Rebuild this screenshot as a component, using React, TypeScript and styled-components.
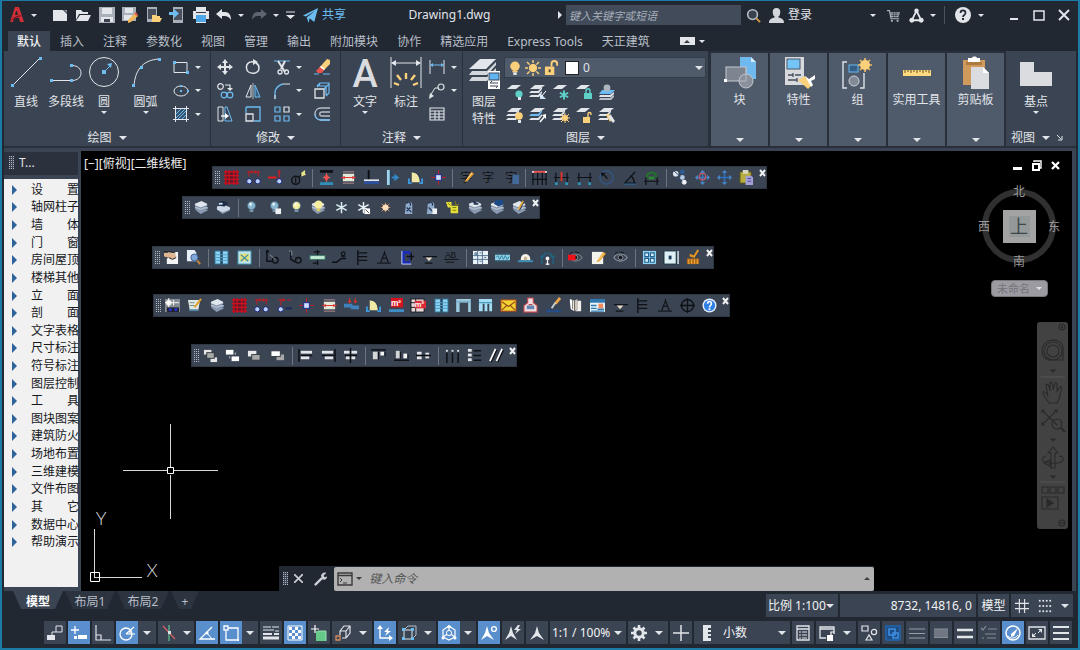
import React, { ReactNode } from 'react';
import styled, { createGlobalStyle, css } from 'styled-components';

const sans = `"Noto Sans", "Noto Sans CJK SC", sans-serif`;
const c = {
  frame: '#1c7ba5',
  chrome: '#212832',
  panel: '#3b4453',
  raised: '#4f5a6b',
  edge: '#29303b',
  text: '#e1e4e8',
  dim: '#b9bfc8',
  white: '#e2e5e9',
  blue: '#6cbcf2',
  amber: '#fbd07a',
  teal: '#5fd0c8',
  active: '#5a8fcd',
};

const GlobalStyle = createGlobalStyle`
  *, *::before, *::after { box-sizing: border-box; }
  body { margin: 0; background: ${c.chrome}; font: 12px/16px ${sans}; color: ${c.text}; }
  button, input, select { font: inherit; color: inherit; margin: 0; padding: 0; border: 0; border-radius: 0; background: transparent; }
  svg { display: block; flex: none; }
  ul { list-style: none; margin: 0; padding: 0; }
`;

/* ---------- drawing helpers ---------- */

const L = (d: string, stroke = c.white, w = 1, fill = 'none') => (
  <path d={d} stroke={stroke} strokeWidth={w} fill={fill} />
);
const F = (d: string, fill = c.white) => <path d={d} fill={fill} />;
const R = (x: number, y: number, w: number, h: number, fill = c.white, stroke?: string) => (
  <rect x={x} y={y} width={w} height={h} fill={fill} stroke={stroke} />
);
const C = (x: number, y: number, r: number, fill = 'none', stroke?: string, w = 1) => (
  <circle cx={x} cy={y} r={r} fill={fill} stroke={stroke} strokeWidth={w} />
);

const sheets = (a: string, b: string) => (
  <>
    {F('M5 1H15L10 5H0Z', a)}
    {F('M1 7H8L12 3V5L9 9H-1Z', b)}
    {F('M1 11H8L12 7V9L9 13H-1Z', a)}
  </>
);
const stack = (
  <>
    {F('M1 10L9 8L15 11L7 15Z', '#8b9bb4')}
    {F('M1 7L9 5L15 8L15 9L7 12L1 9Z', '#aebccf')}
    {F('M1 4L8 1L14 4V6L7 8L1 6Z', '#dfe6ee')}
    {L('M1 6L7 8.500L14 6M1 9L7 11.500L15 9', '#7c8aa0')}
  </>
);
const bulb = (a: string) => (
  <>
    {C(8, 6, 4.4, a, '#46627a')}
    {F('M6 3H8V6H6Z', '#fff')}
    {R(6, 10, 4, 3, '#7793a8')}
    {R(7, 13, 2, 2, '#333c48')}
  </>
);
const flake = (k: string, w = 1.6) => L('M8 2V14M2.500 5L13.500 11M13.500 5L2.500 11', k, w);
const redGrid = (
  <>
    {R(1, 1, 14, 14, '#5c1a28')}
    {L('M2 0V16M5.500 0V16M10.500 0V16M14 0V16M0 2H16M0 6H16M0 10H16M0 14H16', '#cf1020', 1.3)}
  </>
);
const twoColumns = (
  <>
    {L('M3 1V7M13 1V7M1 2H15', '#c41a24')}
    {F('M5 0V4L8 2Z M11 0V4L8 2Z', '#c41a24')}
    {C(3.5, 12, 2.8, '#b8d0ff', '#16206e')}
    {C(12.5, 12, 2.8, '#b8d0ff', '#16206e')}
  </>
);
const wallPiece = (
  <>
    {L('M2 2H14M2 14H14', '#b98d92')}
    {R(2, 4, 12, 8, '#e6ead8')}
    {L('M0 8H16', '#e02a2a')}
    {F('M4 6V10L1 8Z M12 6V10L15 8Z', '#d8423c')}
  </>
);
const door = (
  <>
    {F('M4 13V2C9 2 13 6 13 13Z', '#f1e7a6')}
    {L('M4 2C9 2 13 6 13 13', '#24384e')}
    {L('M1 9V15M15 9V15M2 14H4M12 14H14', '#3c97dd', 2)}
  </>
);
const column = (
  <>
    {L('M8 0V16M0 8H16', '#c8202c')}
    {R(5, 5, 6, 6, '#cfe0ff', '#1a2394')}
  </>
);
const windowBars = (
  <>
    {R(1, 1, 6, 14, '#8ed2f1', '#2a6789')}
    {R(9, 1, 6, 14, '#8ed2f1', '#2a6789')}
    {L('M1 5H15M1 8H15M1 11H15', '#4a9cc4')}
  </>
);
const noteLines = L('M3 0V16M3 3H13M3 7H13M3 11H13', '#0d1015', 1.4);
const triangleMark = L('M0 14H15M4 13L8 3L12 13M6 9H10M8 1V4', '#14181e', 1.4);
const level = (
  <>
    {L('M1 7H12M10 7H16M3 14H11', '#101318', 1.4)}
    {F('M4 8H11L7.500 12Z', '#e3d8c4')}
  </>
);
const eye = (k: string) => (
  <>
    {L('M1 8C4 3 12 3 15 8C12 13 4 13 1 8Z', k, 1.3)}
    {C(8, 8, 2.4, '#15191f', '#8a9099')}
    {L('M2 4L5 2M7 2L12 3', '#121519')}
  </>
);
const pencil = (
  <>
    {F('M7 11L13 2L16 4L9 12L6 13Z', '#e69a2d')}
    {L('M8 11L14 3', '#ffe38c')}
  </>
);
const charMark = (
  <text x="1" y="13" fontSize="13" fill="#0f1216" fontFamily="Noto Sans CJK SC">字</text>
);
const checker = (
  <>
    {L('M1 1H15V15H1Z', '#fff')}
    {[0, 1, 2, 3].map(y => [0, 1, 2, 3].map(x => (x + y) % 2 === 0 && (
      <React.Fragment key={`${x}-${y}`}>{R(2 + x * 3, 2 + y * 3, 3, 3, '#fff')}</React.Fragment>
    )))}
  </>
);

const glyphs: Record<string, ReactNode> = {
  /* quick access */
  new: <>{F('M1 3H11L15 7V14H1Z')}{F('M12 3L15 6V3Z', '#8b929c')}</>,
  open: <>{F('M1 3H6L8 5H13V7H4L1 13Z')}{F('M5 8H16L13 14H1Z')}</>,
  save: <>{F('M0 0H16V16H0Z', '#a9b0b9')}{R(3, 1, 10, 6)}{R(2, 10, 12, 5)}{R(5, 12, 6, 3, '#3a4250')}</>,
  saveAs: <>{F('M0 0H14V14H0Z', '#a9b0b9')}{R(3, 1, 8, 5)}{R(2, 8, 8, 5)}{F('M6 13L13 6L16 9L9 15L6 16Z', '#f1b95b')}{F('M12 7L14 5L16 8L15 9Z', '#e55b52')}</>,
  mobileOpen: <>{F('M1 0H11V15H1Z', '#a9b0b9')}{R(2, 2, 8, 10, '#4a515c')}{F('M6 8H10L11 9H14V11H16L14 15H6Z', c.amber)}</>,
  mobileSave: <>{F('M4 0H14V16H4Z', '#a9b0b9')}{R(5, 2, 8, 11, '#4a515c')}{F('M0 5H5V2L10 6.500L5 11V8H0Z', c.blue)}</>,
  print: <>{R(3, 0, 10, 4)}{F('M0 4H16V12H0Z')}{R(3, 8, 10, 7, '#4ea7e8')}{L('M3 15.500H13', c.white)}{R(3, 5, 10, 1, '#333b47')}</>,
  undo: <>{F('M0 7L6 2V5H9C13 5 15 8 15 13C13 10 11 9 9 9H6V12Z')}</>,
  redo: <>{F('M16 7L10 2V5H7C3 5 1 8 1 13C3 10 5 9 7 9H10V12Z', '#5c6470')}</>,
  plane: <>{F('M0 8L16 0L12 15L7 11L6 16L4 10L13 3L3 9Z', c.blue)}</>,
  search: <>{C(7, 7, 5.2, '#39424f', '#b7bdc5', 1.7)}{L('M11 11L15 15', '#d49a45', 2)}</>,
  user: <>{F('M8 0C11 0 12 2 12 4C12 7 11 9 10 9V10C14 11 16 12 16 16H0C0 12 2 11 6 10V9C5 9 4 7 4 4C4 2 5 0 8 0Z', '#d3d6da')}</>,
  cart: <>{L('M0 2H3L5 12H15', '#aab1ba', 1.5)}{F('M4 4H16L14 10H5Z', '#aab1ba')}{L('M5 6H15M5 8H14M8 4V10M11 4V10', c.chrome, 0.7)}{C(6, 14.5, 1.4, '#aab1ba')}{C(13, 14.5, 1.4, '#aab1ba')}</>,
  hub: <>{L('M8 3L3 13H13Z', c.white, 2)}{C(8, 3, 2.4, c.white)}{C(3, 13, 2.6, c.white)}{C(13, 13, 2.6, c.white)}</>,

  /* draw */
  rect: <>{L('M1 3.500H14V13.500H1Z')}{R(0, 2, 3, 3, c.blue)}{R(13, 12, 3, 3, c.blue)}</>,
  ellipse: <><ellipse cx="8" cy="8" rx="7" ry="5" fill="none" stroke={c.white} />{R(7, 7, 2, 2, c.blue)}{R(14, 7, 2, 2, c.blue)}{R(7, 2, 2, 2, c.blue)}</>,
  hatch: <>{R(3, 3, 10, 10, '#35536f')}{L('M3 8L8 3M3 12L12 3M5 13L13 5M9 13L13 9', c.blue)}{L('M2.500 0V16M13.500 0V16M0 2.500H16M0 13.500H16')}</>,

  /* modify */
  move: <>{L('M8 2V14M2 8H14', c.white, 2)}{F('M8 0L11 4H5ZM8 16L11 12H5ZM0 8L4 5V11ZM16 8L12 5V11Z')}</>,
  rotate: <>{L('M9 3C4 2 1 5 1.500 9C2 16 14 16 14 9C14 7 13 5 11 4', c.white, 1.5)}{F('M8 0L13 3L8 6Z')}</>,
  trim: <>{L('M0 2H16', c.blue, 1)}{L('M4 2L11 13M11 2L7 10', c.white, 2)}{C(6, 13, 2, 'none', c.white, 1.3)}{C(12.5, 13, 2, 'none', c.white, 1.3)}</>,
  erase: <>{L('M0 15H5M9 15H16', c.blue, 1)}{F('M5 9L13 0L16 1V5L9 12Z', c.amber)}{F('M4 10L6 8L10 11L8 14H4L2 12Z', '#e6544d')}{F('M6 8L7 7L11 10L10 11Z', '#fff')}</>,
  copy: <>{C(3.5, 3.5, 2.8, 'none', c.white, 1.2)}{L('M8 2H13V5', c.white, 1.2)}{F('M10 5H16L13 8Z')}{C(7, 12, 2.8, 'none', c.blue, 1.2)}{C(13, 12, 2.8, 'none', c.blue, 1.2)}</>,
  mirror: <>{L('M6 2V14H1Z')}{L('M10 2V14H15Z', c.blue, 1, '#365a7c')}{L('M8 0V16', c.dim)}</>,
  fillet: <>{L('M1 16V9C2 4 5 2 9 1', c.blue, 1.3)}{L('M9 1H16M1 12V16')}</>,
  explode: <>{L('M1 6H10V15H1Z', c.white, 1.3)}{L('M3 3L6 0H15V10L12 13M10 6L15 1M3 4L6 1M12 4V12M4 3H12', c.blue, 1.2)}</>,
  stretch: <>{L('M1 1H6V15H1Z')}{L('M8 15V1H10L15 15Z', c.blue)}{L('M4 10H9', '#fff', 1.3)}{F('M8 7L12 10L8 13Z', '#fff')}</>,
  scale: <>{L('M1 1H15V15H9M1 1V7', c.blue, 1.3)}{L('M1 8H8V15H1Z', c.white, 1.3)}</>,
  array: <>{L('M1 1H6V6H1ZM1 10H6V15H1ZM10 10H15V15H10Z', c.blue, 1.2)}{L('M10 1H15V6H10Z', c.white, 1.2)}</>,
  offset: <>{L('M16 2H7C-1 2 -1 14 7 14H16M16 6H8C5 6 5 10 8 10H16', c.dim, 1.3)}{L('M16 14H7C3 14 1 11 1 8', c.blue, 1.3)}</>,

  /* annotate */
  linear: <>{L('M1 1V15M15 1V15')}{L('M2 6H14', c.blue)}{F('M1 6L4 4V8ZM15 6L12 4V8Z', c.blue)}</>,
  leader: <>{C(12, 4, 3, 'none', c.white, 1.2)}{L('M9 5H6L1 13')}{F('M0 16L1 10L5 13Z')}</>,
  table: <>{L('M1 2H15V14H1ZM1 5H15M1 8H15M1 11H15M6 5V14M10 5V14', c.white, 1.1)}</>,

  /* layers */
  layOff: <>{F('M5 1H14L9 5H0Z')}{C(12, 10, 3.6, c.teal)}{R(11, 13, 3, 3)}</>,
  layIso: <>{sheets(c.white, c.white)}{F('M10 15V9L16 15Z', '#cfe4f5')}{L('M16 7L11 13', '#fff')}</>,
  layFreeze: <>{F('M5 1H14L9 5H0Z')}<g transform="translate(5 5) scale(.75)">{flake(c.teal, 2.6)}</g></>,
  layLock: <>{F('M5 1H14L9 5H0Z')}{R(8, 9, 8, 6, c.teal)}{L('M10 9V7C10 4 14 4 14 7V9', c.teal, 1.4)}</>,
  layCurrent: <>{F('M3 6H16L12 10H0Z', c.blue)}{F('M1 11H11L15 8V10L12 13H0Z')}{F('M1 14H11L15 11V13L12 16H0Z', c.dim)}{C(8, 4, 3.4, '#aeb4bd')}</>,
  layOn: <>{sheets(c.white, c.white)}{C(12, 9, 3.8, c.amber)}{R(11, 13, 3, 3)}</>,
  layUniso: <>{sheets(c.white, c.blue)}{L('M10 15L15 9', '#fff', 1.4)}{F('M16 7V12L12 8Z', '#fff')}</>,
  layThaw: <>{sheets(c.white, c.white)}{L('M12 6V16M7 11H17M8 7L16 15M16 7L8 15', c.amber, 1)}{C(12, 11, 3, c.amber)}</>,
  layUnlock: <>{F('M5 1H14L9 5H0Z')}{R(7, 10, 7, 6, c.amber)}{L('M12 10V7C12 5 15 5 15 7V8', c.amber, 1.4)}</>,
  layMatch: <>{sheets(c.white, c.white)}{F('M7 8L10 7L13 12L11 15Z', c.amber)}{F('M12 8L16 14L14 16L9 10Z')}</>,
  bulb: <>{C(8, 6, 5.4, c.amber)}{R(5, 11, 6, 2, c.amber)}{R(6, 13, 4, 3)}</>,
  sun: <>{L('M8 0V16M0 8H16M2 2L14 14M14 2L2 14', c.amber, 1.4)}{C(8, 8, 4.6, c.amber, c.raised)}</>,
  unlock: <>{R(1, 7, 10, 9, c.amber)}{L('M8 7V4C8 0 14 0 14 4V6', c.amber, 2)}{R(5, 10, 2, 3, '#4b4232')}</>,

  /* floating toolbars */
  redGrid, twoColumns, wallPiece, door, column, windowBars, noteLines, triangleMark, level, stack,
  axisAdd: <>{L('M12 0V8M0 8H8', '#d01c26', 1.2)}{F('M0 7H9V9H0Z', '#ee1c1c')}{F('M10 1L12 4L14 1Z', '#c41a24')}{C(12, 12, 2.8, '#b8d0ff', '#16206e')}</>,
  axisNo: <>{C(5, 11, 4.3, 'none', '#0f1216', 1.5)}{L('M5 8V14M8 8L13 3', '#0f1216', 1.3)}{F('M11 3L15 0V4L16 5L11 7Z', '#e7e68a')}</>,
  floorGap: <>{R(1, 0, 14, 3, '#0e1116')}{R(1, 13, 14, 3, '#2f8fb9')}{L('M8 3V13M4 8H12', '#b87770')}{F('M8 4L11 8L8 12L5 8Z', '#f0504a')}</>,
  lWall: <>{L('M5 0V11', '#0d0f14', 2)}{R(0, 10, 16, 2, '#dfe5ee')}{R(0, 12, 16, 3, '#2b4f9c')}</>,
  wallMove: <>{R(1, 0, 3, 16, '#9fd4ee')}{L('M6 8H10', '#3189ca', 2)}{F('M9 4L14 8L9 12Z', '#3189ca')}{L('M5 0V16', '#1b3f62')}</>,
  charPencil: <>{charMark}{pencil}</>,
  char: charMark,
  charBlock: <>{charMark}{R(9, 5, 7, 10, '#43699a')}</>,
  dimRed: <>{L('M1 2H15', '#f05050', 2)}{L('M1 3V16M6 3V16M11 3V16M15 3V16M0 10H16', '#0e1116', 1.3)}{C(1, 2, 1, '#fff')}{C(15, 2, 1, '#fff')}</>,
  dimBlue: <>{L('M2 3V14M14 3V14M0 8H16', '#0e1116', 1.3)}{L('M8 2V12', '#e03225', 2)}{R(1, 13, 3, 3, '#2d94b8')}{R(12, 13, 3, 3, '#2d94b8')}</>,
  dimPlain: <>{L('M2 3V14M14 3V14M0 8H16', '#0e1116', 1.3)}{R(1, 13, 3, 3, '#2d94b8')}{R(12, 13, 3, 3, '#2d94b8')}</>,
  radius: <>{C(8, 8, 7, 'none', '#31598a', 1.3)}{L('M4 4L9 9', '#0e1116', 1.4)}{F('M2 3H7L3 7Z', '#0e1116')}</>,
  angle: <>{L('M14 2L3 14H15M9 6C12 8 13 11 13 14', '#0e1116', 1.4)}{L('M2 15H15', '#2c6ea0')}</>,
  arcDim: <>{L('M3 8C3 1 13 1 13 8', '#1d7a25', 2)}{L('M0 12H16M2 8V16M14 8V16', '#0e1116', 1.3)}{F('M5 7H11V10H5Z', '#2a8c2f')}</>,
  nodes: <>{C(4, 4, 3, '#dfe6f0')}{C(11, 8, 2.6, '#b4c9e3')}{C(13, 13, 2.6, '#eef2f7')}{L('M2 1L9 7M4 8L11 13M10 2L14 6', '#274a74')}{R(9, 0, 4, 4, '#2a5e9c')}</>,
  moveRed: <>{L('M8 1V15M1 8H15', '#3b7cc4', 1.4)}{F('M8 0L11 3H5ZM8 16L11 13H5ZM0 8L3 5V11ZM16 8L13 5V11Z', '#4b86c6')}{C(8, 7, 3.5, 'none', '#c45a6a', 1.3)}</>,
  moveBlue: <>{L('M8 1V15M1 8H15', '#2f70ba', 1.6)}{F('M8 0L11 3H5ZM8 16L11 13H5ZM0 8L3 5V11ZM16 8L13 5V11Z', '#4b86c6')}</>,
  paste: <>{R(1, 2, 12, 12, '#b7ad3d', '#4e4a1d')}{R(4, 0, 6, 4, '#d8d8c0')}{F('M7 6H13L15 8V16H7Z', '#a5a1d8')}{L('M9 9H13M9 12H13', '#4a4694')}</>,
  layerEye: <>{F('M1 10L9 8L15 11L7 15Z', '#8b9bb4')}{F('M1 7L9 5L15 8V10L7 13L1 10Z', '#cdd8e6')}{F('M2 3C6 0 11 1 13 4L9 7L3 6Z', '#1f2e44')}{F('M3 3H7V5H3Z', '#cfe0f2')}</>,
  bulbOff: bulb('#86b7cf'),
  bulbPage: <>{bulb('#86b7cf')}{R(9, 9, 6, 6, '#eef1f4')}</>,
  bulbOn: bulb('#f4eea0'),
  bulbAll: <>{stack}{C(8, 5, 4.4, '#f6efa0')}{R(6, 9, 4, 3, '#d9c867')}</>,
  flake: flake('#d8eef2'),
  flakePage: <>{flake('#e8f4f6')}{R(9, 9, 6, 6, '#fff')}{L('M10 10L14 14', '#555')}</>,
  thaw: <>{L('M8 3V13M3 8H13M4 4L12 12M12 4L4 12', '#d58f5c')}{C(8, 8, 3.3, '#ffe0ba')}</>,
  lock: <>{F('M5 7C4 1 12 0 12 5V15H4Z', '#8fa9c8')}{L('M6 4C7 1 11 2 10 6M6 8L11 13M6 12L10 8', '#1f3050', 1.2)}</>,
  lockPage: <>{F('M5 7C4 1 12 0 12 5V15H4Z', '#8fa9c8')}{L('M6 4C7 1 11 2 10 6M6 8L11 13', '#1f3050', 1.2)}{R(10, 9, 5, 6, '#eef1f4')}</>,
  unlockY: <>{F('M1 2H7V6H14V14H6V8H3Z', '#e6df39')}{L('M3 3L6 6M8 8H12M8 11H12M11 1V5H15', '#7a7a12')}</>,
  stackDark: <>{stack}{L('M5 2H9M6 4H11', '#2b3c56', 2)}</>,
  stackBlue: <>{stack}{F('M6 0H14V5L9 7L4 4Z', '#1d4b86')}</>,
  stackPen: <>{stack}{L('M12 1L7 10', '#e2a237', 2)}{L('M13 2L8 11', '#26303c')}</>,
  handPage: <>{F('M4 2H15V15H3V9H4Z', '#f3f4f5')}{F('M0 3H6L12 4L13 8L9 10L5 8L0 7Z', '#e0b592')}{L('M0 2H5L12 3M5 8L9 10L13 8', '#1b1613')}</>,
  magPage: <>{F('M1 0H9L11 3V12H1Z', '#e8eff8')}{C(9, 8, 3.8, '#7ea6d6', '#3c5d8f')}{L('M12 11L15 15', '#c58742', 2)}</>,
  mapBox: <>{R(1, 1, 14, 14, '#bfe4ee', '#3b8ba8')}{R(3, 4, 10, 8, '#dfe07c')}{L('M4 5L12 12M12 5L4 12', '#3b8ba8', 1.2)}</>,
  nodeLine: <>{L('M2 0V12H8', '#0e1116', 1.5)}{C(11, 11, 3, 'none', '#0e1116', 1.4)}{L('M5 5L11 10', '#8d949e')}{R(1, 0, 3, 3, '#0e1116')}</>,
  nodeLine2: <>{L('M3 0V10L8 13', '#0e1116', 1.5)}{C(11, 11, 3, 'none', '#0e1116', 1.4)}{L('M1 1H4V6', '#8d949e')}</>,
  slab: <>{L('M8 0V16M4 2H11M3 14H9', '#0e1116', 1.3)}{R(0, 6, 16, 4, '#c7ecd6', '#3a7e67')}</>,
  stairs: <>{L('M0 13H5L10 9H15', '#0e1116', 1.6)}{C(12, 4, 2, 'none', '#0e1116', 1.2)}{L('M10 7H14', '#0e1116')}</>,
  exitBlock: <>{R(2, 1, 9, 14, '#1a2bb8')}{R(5, 4, 5, 8, c.panel)}{L('M7 7H15M12 3V11', '#0e1116', 1.5)}{L('M2 1V15H12', '#cfd6ff')}</>,
  abMark: <>{<text x="1" y="9" fontSize="9" fontFamily="Liberation Sans" fill="#0e1116">AB</text>}{L('M0 10H16M2 13H11', '#0e1116')}</>,
  plan: <>{R(0, 1, 16, 14, '#e9f3f8')}{L('M5 1V15M10 1V15M0 6H16M0 10H16M2 3H4V5H2ZM7 3H9M12 8H14M7 12H9', '#4a6c8c', 1)}</>,
  waves: <>{R(0, 5, 16, 6, '#8fd0e4')}{L('M0 4H16M0 12H16', '#2e5a72')}{L('M1 8L3 6L5 10L7 6L9 10L11 6L13 10L15 7', '#2c7ea0')}</>,
  dome: <>{F('M3 11C2 2 14 2 13 11Z', '#f6f3ea')}{R(0, 11, 16, 2, '#3a92b8')}{C(8, 9, 2, '#c7b696')}</>,
  portal: <>{L('M2 15V7L7 3M14 15V7L9 3M0 7H5M11 7H16', '#1f6480', 1.6)}{C(8, 9, 2, '#f2f2f2')}{L('M8 11V16M6 15H10', '#fff', 1.3)}</>,
  eyeRed: <>{eye('#757b84')}{R(0, 5, 8, 6, '#f0111a')}</>,
  pagePencil: <>{R(1, 2, 12, 13, '#f3f4ee')}{pencil}</>,
  eye: eye('#8a919c'),
  tiles: <>{R(1, 1, 14, 14, '#8fd2f3')}{L('M3 3H7V7H3ZM9 3H13V7H9ZM3 9H7V13H3ZM9 9H13V13H9Z', '#23618c', 1.2, '#d9f0fb')}</>,
  film: <>{R(0, 1, 13, 14, '#dff0f4', '#12303c')}{R(5, 6, 3, 4, '#143a56')}{L('M15 1V15', '#dff0f4', 1.5)}</>,
  broom: <>{L('M13 0L8 8', '#e8971c', 2)}{F('M1 9H14V15H1Z', '#b36a15')}{L('M3 10V15M6 10V15M9 10V15M12 10V15', '#f2b247')}{F('M4 4L9 6L8 8L4 7Z', '#e8971c')}</>,
  config: <>{R(0, 1, 16, 14, '#858b93')}{C(4, 5, 3, '#f1f1ee')}{L('M4 0V10M0 5H15M9 2V8', '#fff')}{R(2, 10, 13, 5, '#20232a')}{R(4, 11, 3, 3, '#2632d8')}{R(10, 11, 3, 3, '#2632d8')}</>,
  notePen: <>{F('M1 2H14L12 13H3Z', '#dfe8e3')}{L('M3 5H8M3 8H8', '#6e8b84')}{L('M15 1L8 10', '#e0a22b', 2)}{L('M2 13H12', '#4f84a4', 2)}</>,
  axisDots: <>{L('M4 1V8M1 2H9M11 2H15', '#c41a24')}{F('M6 0V4L9 2Z', '#c41a24')}{C(4, 12, 2.8, '#b8d0ff', '#16206e')}{L('M9 11H16', '#1b2560', 2)}</>,
  beamArrows: <>{F('M0 6H9V8H16V12H7V10H0Z', '#3f81ba')}{L('M6 0V5M12 0V5', '#e0332d')}{F('M4 3H8L6 6ZM10 3H14L12 6Z', '#e0332d')}</>,
  area: <>{R(2, 0, 13, 10, '#d6141f')}<text x="2" y="9" fontSize="9" fontWeight="700" fontFamily="Liberation Sans" fill="#fff">m²</text>{R(0, 12, 16, 3, '#3e8dc4')}</>,
  areaTable: <>{R(0, 1, 14, 14, '#e9d7d8', '#15181d')}{L('M0 5H14M0 10H14M5 1V15', '#15181d')}{R(4, 3, 12, 8, '#dc2c35')}<text x="4" y="10" fontSize="8" fontWeight="700" fontFamily="Liberation Sans" fill="#fff">m²</text></>,
  gate: <>{F('M0 1H16V15H13V5H4V15H0Z', '#7fb2cc')}{L('M1 2H15M2 5V15M14 5V15', '#c6e2ee')}</>,
  gateTwo: <>{F('M1 1H15V14H12V6H10V14H7V6H5V14H1Z', '#a3dcf3')}{L('M1 5H15', '#3188b4')}</>,
  mail: <>{R(0, 2, 16, 12, '#f0d534', '#b5441b')}{L('M1 4L8 9L15 4M1 13L6 8M15 13L10 8', '#9c4a16', 1.2)}</>,
  stamp: <>{F('M5 0H11V5L15 8V15H1V8L5 5Z', '#f3dedf')}{L('M5 0H11V5L15 8V15H1V8L5 5ZM6 7H10', '#b8444d', 1.2)}{R(4, 8, 8, 4, '#6387b4')}</>,
  brush: <>{L('M15 0L10 6', '#eda64a', 3)}{L('M10 5L6 11', '#c8d2da', 2)}{L('M0 14H16M3 11V16M12 11V16', '#1d4f9a', 1.4)}</>,
  book: <>{F('M2 1L7 3V14L3 12L2 4Z', '#fff')}{F('M7 3L10 1V12L7 14Z', '#cfc8c1')}{F('M10 3H14V14H8L10 12Z', '#f3efe9')}{L('M7 3V14M5 2V12', '#6a625b')}</>,
  sheet: <>{R(0, 2, 16, 13, '#e6f3fa')}{R(0, 1, 16, 4, '#2f78ae')}{L('M1 8H7M1 11H7M1 14H15M8 12H15', '#2f78ae', 1.4)}{R(9, 6, 5, 5, '#f38a5b')}</>,
  compass: <>{C(8, 8, 6.4, 'none', '#0e1116', 1.5)}{L('M8 0V16M0 8H16', '#0e1116', 1.4)}</>,
  help: <>{C(8, 8, 7.5, '#e7f0fc')}{C(8, 8, 6, '#2e7fe6')}{L('M6 6C6 3 10 3 10 6C10 8 8 8 8 10', '#fff', 1.7)}{R(7, 11, 2, 2, '#fff')}</>,
  order1: <>{R(1, 2, 8, 5, '#e4e5e4')}{R(8, 10, 7, 5, '#e4e5e4')}{R(4, 5, 8, 6, '#a9aaaa', '#30353d')}</>,
  order2: <>{R(1, 2, 8, 5, '#fff')}{R(7, 9, 8, 5, '#fff')}{L('M11 5V7M5 9V11', '#d5d7d9')}</>,
  order3: <>{R(1, 3, 9, 6, '#e9eae9')}{R(5, 7, 9, 6, '#a7a8a7', '#343a42')}</>,
  order4: <>{R(7, 7, 8, 6, '#a7a8a7')}{R(1, 3, 10, 6, '#fff', '#343a42')}</>,
  alignL: <>{L('M1 1V15M3 8H15', '#0e1116', 1.6)}{R(3, 3, 12, 3)}{R(3, 9, 9, 3)}</>,
  alignR: <>{L('M15 1V15M1 8H14', '#0e1116', 1.6)}{R(1, 3, 12, 3)}{R(4, 9, 9, 3)}</>,
  alignC: <>{L('M8 0V16M2 8H15', '#0e1116', 1.6)}{R(1, 3, 6, 3)}{R(9, 3, 6, 3)}{R(3, 9, 4, 3)}{R(9, 9, 4, 3)}</>,
  alignT: <>{L('M0 2H16', '#0e1116', 1.6)}{R(2, 4, 5, 8, '#d3d5d6')}{R(10, 4, 4, 4, '#f2f3f3')}{L('M8 4V12M15 4V9', '#0e1116')}</>,
  alignB: <>{L('M0 13H16', '#0e1116', 1.6)}{R(2, 3, 4, 8, '#d3d5d6')}{R(10, 6, 4, 5, '#f2f3f3')}{L('M7 4V11M15 7V11', '#0e1116')}</>,
  alignM: <>{L('M0 8H16', '#0e1116', 1.6)}{R(1, 4, 5, 3)}{R(1, 9, 5, 3)}{R(10, 5, 4, 2)}{R(10, 9, 4, 2)}</>,
  distV: <>{L('M2 5V16M8 5V16M14 5V16', '#0e1116', 1.6)}{R(1, 2, 2, 2)}{R(7, 2, 2, 2)}{R(13, 2, 2, 2)}</>,
  distH: <>{R(1, 1, 4, 3)}{R(1, 6, 4, 3)}{R(1, 11, 4, 3)}{L('M7 3H15M7 8H15M7 13H15', '#0e1116', 1.5)}</>,
  slashes: <>{L('M2 15L8 2M9 15L15 2', '#0e1116', 2)}{L('M1 14L7 1M8 14L14 1', '#fff', 1.8)}</>,

  /* status bar */
  drafting: <>{L('M9 1H15V7H9ZM9 7H5V10')}{R(0, 10, 8, 5)}</>,
  dynInput: <>{L('M4 1V9M0 5H8', '#fff', 1.3)}{R(7, 10, 9, 4, '#fff')}{R(3, 11, 3, 3, '#fff')}</>,
  ortho: <>{L('M1 0V15H16M1 10H6V15', c.white, 1.2)}</>,
  polar: <>{C(7, 9, 6, 'none', '#fff', 1.3)}{L('M7 9L15 2M7 9H16M11 4V9', '#fff', 1.2)}</>,
  isoDraft: <>{L('M2 1L14 14', '#d65f67', 1.2)}{L('M8 0V16', '#62c58f', 1.2)}{R(7, 6, 3, 3, '#dce2e6')}</>,
  track: <>{L('M13 2L1 14H16', '#fff', 1.3)}{C(8, 8, 1.6, '#fff')}{L('M8 8L13 14', '#fff', 1)}</>,
  osnap: <>{L('M5 3H15V15H3V6', '#fff', 1.3)}{L('M1 1H5V5H1Z', '#fff', 1.3)}{R(14, 14, 2, 2, '#fff')}</>,
  lineweight: <>{L('M0 2H8M9 2H16M0 5H11M12 6H16', c.white, 1.2)}{L('M0 9H9M11 9H16', c.white, 2)}{L('M0 13H16', c.white, 3)}</>,
  transparency: checker,
  cycle: <>{R(5, 6, 10, 10, '#66c98a')}{L('M7 6H15V16', '#98e0b4')}{L('M4 0V8M0 4H8', '#fff', 1.2)}</>,
  osnap3d: <>{L('M5 6L9 1H15V8L11 13H7M5 6H11V13M11 6L15 1M5 6V10', c.white, 1.2)}{L('M1 11H5V15H1Z', '#d68b5e', 1.3)}</>,
  dynUcs: <>{L('M3 2V13H15', '#fff', 1.4)}{F('M3 0L6 4H0ZM16 13L12 10V16ZM12 2L7 7H10L8 11L14 6H11Z', '#fff')}</>,
  filter: <>{L('M3 5H11V14H3Z', c.white)}{L('M4 4L7 1H15V10L12 13', c.dim)}{R(1, 3, 3, 3, c.blue)}{R(10, 3, 3, 3, c.blue)}{R(1, 12, 3, 3, c.blue)}{R(10, 12, 3, 3, c.blue)}</>,
  gizmo: <>{L('M8 1L14 5V12L8 15L2 12V5ZM8 8V1M8 8L2 12M8 8L14 12', '#fff', 1.2)}{C(8, 8, 2.6, c.active, '#fff')}{C(8, 1.5, 1.5, '#fff')}{C(2, 13, 1.5, '#fff')}{C(14, 13, 1.5, '#fff')}</>,
  annoVis: <>{F('M6 1L8 8L13 15L6 11L0 15L4 8Z', '#fff')}{C(13, 4, 2.4, 'none', '#fff', 1.4)}</>,
  annoAuto: <>{F('M6 1L8 8L12 15L6 11L0 15L4 8Z')}{F('M13 0L9 5H12L10 9L16 4H13L15 0Z')}</>,
  anno: F('M8 1L10 8L15 15L8 11L1 15L6 8Z'),
  gear: <>{L('M8 0V16M0 8H16M2.500 2.500L13.500 13.500M13.500 2.500L2.500 13.500', c.white, 2.6)}{C(8, 8, 4.2, c.panel, c.white, 3)}</>,
  plus: L('M8 0V16M0 8H16', c.white, 1.5),
  ruler: <>{F('M4 0H12V3H9V5H12V7H9V9H12V11H9V13H12V16H4Z')}</>,
  quickProps: <>{L('M2 1H14V15H2ZM2 4H14', c.white, 1.3)}{L('M4 7H6M7 7H12M4 10H6M7 10H12M4 13H6M7 13H12')}</>,
  lockUi: <>{L('M7 13H1V2H15V7M1 4H15', c.white, 1.3)}{R(8, 10, 6, 6, '#fff')}{L('M12 10V7H15V9', '#fff', 1.2)}</>,
  isolate: <>{L('M1 1H7V6H1ZM5 15L8 10L11 15Z', c.white, 1.2)}{C(13, 7, 2.6, 'none', c.white, 1.2)}</>,
  hardware: <>{R(0, 0, 16, 16, '#1d4e85')}{L('M4 4H10V10H4ZM8 8H13V13H8Z', '#3e8de0', 1.6)}{L('M1 1H15V15H1Z', '#2a6db5')}</>,
  thin: L('M0 4H16M0 8.500H16M0 13H16', '#969ca6', 1.2),
  grey: <>{R(1, 4, 14, 9, '#707782')}{L('M1 4H15M1 12.500H15', '#888e98')}</>,
  thick: L('M0 5H16M0 12H16', c.white, 2.4),
  checks: L('M0 3L2 5L5 1M7 4H16M4 9H15M1 13H3M6 13H15', '#858b95', 1.2),
  clean: <>{C(8, 8, 7, 'none', '#fff', 1.5)}{F('M6 9L13 3L9 11L6 12Z', '#fff')}{L('M3 11C5 14 10 14 13 10', '#fff')}</>,
  full: <>{L('M0 2H16V14H0Z', c.white, 1.3)}{L('M4 11L7 8M9 8L12 5', c.white)}{F('M3 8V12H7ZM13 4V8L9 4Z')}</>,
  menu: L('M0 2H16M0 8H16M0 14H16', c.white, 2),
  grid: L('M5 0V16M11 0V16M0 5H16M0 11H16', c.white, 1.3),
  dots: <>{[2, 8, 14].map(y => [1, 5, 9, 13].map(x => <React.Fragment key={`${x}-${y}`}>{R(x, y - 1, 2, 2)}</React.Fragment>))}</>,
  wrench: <>{L('M1 15L9 7', '#cdd1d6', 2.6)}{F('M8 4C9 1 12 0 14 1L11 4L12 6L15 5C15 8 12 10 9 8Z', '#cdd1d6')}</>,
  prompt: <>{L('M1 2H15V14H1ZM1 4.500H15', '#3a3a3a', 1.4)}{L('M3 7L5 9L3 11M6 12H10', '#3a3a3a')}</>,
};

const Icon = ({ name, size = 16 }: { name: string; size?: number }) => (
  <svg width={size} height={size} viewBox="0 0 16 16" aria-hidden="true" overflow="visible">{glyphs[name]}</svg>
);

const big: Record<string, ReactNode> = {
  line: <>{L('M3 29L30 2')}{R(1, 28, 3, 3, c.blue)}{R(29, 1, 3, 3, c.blue)}</>,
  polyline: <>{L('M2 24.500H22C34 24.500 34 9.500 22 9.500')}{R(0, 23, 3, 3, c.blue)}{R(20, 23, 3, 3, c.blue)}{R(20, 8, 3, 3, c.blue)}</>,
  circle: <>{C(16, 16, 14.5, 'none', c.white)}{L('M16 16L23 9', c.blue)}{F('M24 7L23 12L19 8Z', c.blue)}{R(14, 14, 4, 4, c.blue)}</>,
  arc: <>{L('M4 30C5 15 12 4 29 3')}{R(2, 28, 3, 3, c.blue)}{R(10, 10, 3, 3, c.blue)}{R(28, 2, 3, 3, c.blue)}</>,
  dim: <>{L('M1 1V32M31 1V32')}{L('M2 7H30')}{F('M1 7L6 4V10ZM31 7L26 4V10Z')}{L('M16 17V23M7 19L11 24M25 19L21 24M4 27L9 29M28 27L23 29', c.amber, 2.4)}</>,
  layers: <>{F('M12 3H28L18 13H1Z')}{F('M4 15H19L28 6V9L19 19H1Z', '#d3d6da')}{F('M4 21H19L28 12V15L19 25H1Z', '#d3d6da')}{R(20, 15, 12, 18, '#fff')}{R(21, 17, 10, 7, '#62b4f0', '#35465a')}{L('M22 27H30M24 25L22 27M22 30H30M28 32L30 30', '#3c4553')}</>,
  block: <>{F('M16 0H27L32 5V22H16Z', '#70b9ee')}{F('M27 0V5H32Z', '#d3eafa')}{R(2, 10, 20, 14, '#7d8591', '#c4c8ce')}{C(22, 24, 7, '#8a919c', '#c4c8ce')}{L('M22 10V24H15', '#b4b9c1')}{R(0, 22, 3, 3, '#fff')}</>,
  props: <>{R(2, 0, 19, 28, '#d7d9dc')}{R(4, 2, 13, 10, '#74c4f5', '#4b586a')}{L('M5 18H10M12 18H18M5 23H14M10 16V20M14 21V25', '#454e5c', 1.3)}{F('M15 23L22 19L29 28L25 32Z', c.amber)}{F('M22 19L26 22L32 18V22L28 24L30 28L28 30Z', '#fff')}</>,
  group: <>{L('M5 5H1V31H5M18 31H22V16', '#dfe3e8', 1.4)}{R(7, 8, 9, 7, '#365f86', '#68b7ee')}{C(12, 24, 5, '#828a96', '#ccd0d5')}{L('M23 1V15M16 8H30M18 3L28 13M28 3L18 13', '#f4bf62', 1.6)}{C(23, 8, 5, c.amber)}</>,
  ruler: <>{R(2, 13, 28, 6, '#ffd97d')}{L('M4 13V16M7 13V15M10 13V16M13 13V15M16 13V16M19 13V15M22 13V16M25 13V15M28 13V16', '#654f2b')}</>,
  clip: <>{R(3, 3, 22, 25, '#cf9a5c')}{F('M8 1H12C12 -1 17 -1 17 1H20V5H8Z', '#fff')}{R(6, 5, 16, 3, '#ad7a40')}{F('M11 10H23L29 16V32H11Z', '#dadcdf')}{F('M23 10V16H29Z', '#fff')}</>,
  base: F('M0 6H14V16H32V30H0Z', '#dadcdf'),
};
const BigIcon = ({ name }: { name: string }) => (
  <svg width="32" height="32" viewBox="0 0 32 32" aria-hidden="true" overflow="visible">
    {big[name]}
  </svg>
);

/* ---------- shared parts ---------- */

const Caret = styled.span<{ $small?: boolean; $side?: boolean; $up?: boolean; $dark?: boolean }>`
  flex: none;
  width: 0;
  height: 0;
  border: solid transparent;
  border-width: ${p => (p.$small ? '3px 3px 0' : '4px 4px 0')};
  border-top-color: ${p => (p.$dark ? '#3d3d3d' : c.white)};
  ${p => p.$side && css`border-width: 4px 0 4px 4px; border-color: transparent transparent transparent ${c.white};`}
  ${p => p.$up && css`transform: rotate(180deg);`}
`;

const PlainButton = styled.button<{ $w?: number }>`
  display: flex;
  flex: none;
  align-items: center;
  justify-content: center;
  width: ${p => (p.$w ? `${p.$w}px` : 'auto')};
  height: 100%;
`;

const Window = styled.div`
  display: flex;
  flex-direction: column;
  min-width: 1080px;
  min-height: 100vh;
  padding: 1px 2px 0 2px;
  border: solid ${c.frame};
  border-width: 1px 2px 2px 2px;
  background: ${c.chrome};
`;

/* ---------- title bar ---------- */

const TitleBar = styled.header`
  display: flex;
  height: 26px;
  align-items: center;
  padding-left: 3px;
`;
const QuickTools = styled.div`
  display: flex;
  width: 188px;
  height: 100%;
  margin-left: 8px;
  & > button { flex: 1; }
`;
const Share = styled.button`
  display: flex;
  align-items: center;
  gap: 4px;
  margin-left: 4px;
  color: ${c.blue};
`;
const DocTitle = styled.h1`
  flex: 1;
  margin: 0;
  font-size: 12px;
  font-weight: 400;
  text-align: center;
`;
const HelpSearch = styled.input`
  width: 175px;
  height: 20px;
  padding: 0 3px;
  background: #414b5a;
  font-size: 11px;
  &::placeholder { color: #a7afba; font-style: italic; opacity: 1; }
`;
const Login = styled.button`
  display: flex;
  align-items: center;
  gap: 4px;
  width: 99px;
  padding-left: 4px;
`;
const Divider = styled.span`
  width: 1px;
  height: 18px;
  margin: 0 7px 0 6px;
  background: #4a525e;
`;
const WindowControls = styled.div`
  display: flex;
  height: 100%;
  margin-left: 13px;
`;

/* ---------- ribbon ---------- */

const RibbonTabs = styled.nav`
  display: flex;
  gap: 1px;
  height: 23px;
  padding: 3px 0 0 4px;
`;
const RibbonTab = styled.button<{ $on?: boolean }>`
  padding: 2px 9px 0;
  color: ${p => (p.$on ? '#f1f3f5' : c.dim)};
  background: ${p => (p.$on ? c.panel : 'transparent')};
  font-weight: ${p => (p.$on ? 500 : 400)};
`;
const Collapse = styled.button`
  display: flex;
  align-items: center;
  gap: 4px;
  margin-left: 20px;
`;
const CollapseBox = styled.span`
  display: flex;
  align-items: center;
  justify-content: center;
  width: 15px;
  height: 8px;
  background: ${c.white};
`;
const Ribbon = styled.section`
  display: flex;
  height: 97px;
  border-bottom: 2px solid ${c.edge};
  background: ${c.panel};
`;
const PanelBody = styled.div`
  display: flex;
  flex: 1;
  padding: 4px 0 0 1px;
`;
const PanelTitle = styled.button`
  display: flex;
  align-items: center;
  justify-content: center;
  gap: 7px;
  height: 17px;
  padding-top: 1px;
`;
const Panel = styled.section<{ $w?: number }>`
  display: flex;
  flex-direction: column;
  flex: ${p => (p.$w ? 'none' : '1')};
  width: ${p => (p.$w ? `${p.$w}px` : 'auto')};
  border-right: 1px solid ${c.edge};
  &:last-child { border-right: 0; padding-right: 8px; }
`;
const Label = styled.span`
  white-space: pre-line;
  text-align: center;
  line-height: 17px;
`;
const BigTool = styled.button<{ $w: number }>`
  display: flex;
  flex: none;
  flex-direction: column;
  align-items: center;
  width: ${p => p.$w}px;
  height: 74px;
  padding-top: 1px;
  & > ${Label} { padding-top: 5px; }
  & > ${Caret} { margin-top: 1px; }
`;
const TextGlyph = styled.span`
  height: 32px;
  font: 500 38px/36px Roboto, sans-serif;
  color: #dadcdf;
`;
const ToolGrid = styled.div<{ $cols: string }>`
  display: grid;
  grid-template-columns: ${p => p.$cols};
  grid-template-rows: 24px 23px 24px;
`;
const SmallTool = styled.button`
  display: flex;
  align-items: center;
  gap: 6px;
  padding: 0 5px;
`;
const LayerTools = styled.div`
  flex: 1;
  padding: 2px 2px 0 0;
`;
const LayerCombo = styled.div`
  display: flex;
  align-items: center;
  gap: 3px;
  height: 21px;
  padding: 0 2px 0 3px;
  border: 1px solid #333c49;
  background: ${c.raised};
`;
const Swatch = styled.span`
  width: 14px;
  height: 14px;
  margin-left: 3px;
  border: 1px solid #222;
  background: #fff;
`;
const BareSelect = styled.select`
  flex: 1;
  min-width: 0;
  height: 100%;
  appearance: none;
  padding-left: 1px;
`;
const LayerGrid = styled.div`
  display: grid;
  grid-template-columns: repeat(5, 23px);
  grid-auto-rows: 23px;
  padding-top: 2px;
`;
const LayerButton = styled.button`
  display: flex;
  align-items: center;
  padding-left: 3px;
`;
const FoldedPanel = styled.button`
  display: flex;
  flex: none;
  flex-direction: column;
  align-items: center;
  gap: 2px;
  width: 57px;
  padding: 4px 0;
  background: ${c.raised};
  & > ${Caret} { margin-top: auto; }
`;
const FoldedRow = styled.div`
  display: flex;
  gap: 2px;
  padding: 2px 2px 0;
  background: ${c.edge};
`;

/* ---------- workspace ---------- */

const Workspace = styled.main`
  display: flex;
  flex: 1;
  padding: 3px 4px 0 0;
  background: ${c.panel};
`;
const Palette = styled.aside`
  display: flex;
  flex: none;
  flex-direction: column;
  width: 74px;
  margin: 1px 3px 4px 0;
  background: #f1f1f2;
`;
const PaletteHead = styled.div`
  display: flex;
  align-items: center;
  gap: 5px;
  height: 27px;
  padding: 0 5px 2px;
  border-bottom: 4px solid ${c.panel};
  background: #2b323e;
`;
const Grip = styled.span`
  flex: none;
  width: 5px;
  height: 13px;
  background:
    repeating-linear-gradient(90deg, transparent 0 1px, ${c.panel} 1px 2px),
    repeating-linear-gradient(#b3b9c2 0 1px, ${c.panel} 1px 2px);
`;
const PaletteList = styled.ul`
  display: grid;
  grid-template-rows: repeat(21, 1fr);
  height: 370px;
  margin-top: 2px;
`;
const PaletteItem = styled.button`
  display: flex;
  align-items: center;
  gap: 14px;
  width: 100%;
  height: 100%;
  padding-left: 8px;
  overflow: hidden;
  color: #17191c;
  white-space: nowrap;
  &::before {
    content: '';
    flex: none;
    border: solid transparent;
    border-width: 5px 0 5px 5px;
    border-left-color: #2d6399;
  }
`;
const Canvas = styled.div`
  position: relative;
  flex: 1;
  min-height: 440px;
  overflow: hidden;
  background: #000;
`;
const ViewLabel = styled.div`
  padding: 5px 3px;
  color: #eee;
`;
const Floating = styled.div<{ $x: number; $y: number; $w: number }>`
  position: absolute;
  left: ${p => p.$x}px;
  top: ${p => p.$y}px;
  display: flex;
  align-items: center;
  width: ${p => p.$w}px;
  height: 23px;
  padding: 0 8px 0 2px;
  border: 1px solid #2f3743;
  background: ${c.panel};
`;
const FloatingTools = styled.div`
  display: flex;
  flex: 1;
  align-items: center;
`;
const ToolButton = styled.button`
  display: flex;
  flex: 1 1 0;
  justify-content: center;
`;
const ToolRule = styled.span`
  flex: none;
  width: 1px;
  height: 18px;
  margin: 0 2px 0 3px;
  background: #6c7480;
`;
const CloseFloating = styled.button`
  position: absolute;
  top: 2px;
  right: 0;
`;
const Crosshair = styled.svg`
  position: absolute;
  left: 42px;
  top: 273px;
`;
const Ucs = styled.svg`
  position: absolute;
  left: 8px;
  bottom: 0;
`;
const ChildControls = styled.div`
  position: absolute;
  right: 11px;
  top: 9px;
  display: flex;
  gap: 8px;
`;
const Cube = styled.svg`
  position: absolute;
  right: 9px;
  top: 28px;
`;
const UcsMenu = styled.button`
  position: absolute;
  right: 24px;
  top: 129px;
  display: flex;
  align-items: center;
  justify-content: space-between;
  width: 57px;
  height: 17px;
  padding: 0 5px;
  border: 1px solid #77777d;
  border-radius: 4px;
  background: #9b9ba1;
  color: #74747a;
  font-size: 11px;
`;
const NavBar = styled.div`
  position: absolute;
  right: 4px;
  top: 171px;
  border-radius: 3px;
  background: #424242;
`;
const CommandLine = styled.div`
  position: absolute;
  right: 20%;
  bottom: 0;
  left: 20%;
  display: flex;
  align-items: center;
  height: 25px;
  padding-left: 4px;
  background: ${c.chrome};
`;
const CommandBox = styled.label`
  display: flex;
  flex: 1;
  align-items: center;
  gap: 3px;
  height: 24px;
  padding: 0 4px 0 3px;
  border-radius: 2px;
  background: #b1b1b1;
`;
const CommandInput = styled.input`
  flex: 1;
  padding: 0 4px;
  color: #333;
  outline: 0;
  &::placeholder { color: #555; font-style: italic; opacity: 1; }
`;

/* ---------- bottom bars ---------- */

const LayoutRow = styled.div`
  display: flex;
  justify-content: space-between;
  height: 29px;
  padding: 0 3px 0 9px;
`;
const LayoutTabs = styled.nav`
  display: flex;
  height: 18px;
`;
const LayoutTab = styled.button<{ $on?: boolean; $w: number }>`
  width: ${p => p.$w}px;
  margin-right: 2px;
  padding-top: 3px;
  background: ${p => (p.$on ? c.panel : '#2c3440')};
  color: ${p => (p.$on ? '#fff' : c.dim)};
  font-weight: ${p => (p.$on ? 700 : 400)};
  clip-path: polygon(0 0, 100% 0, calc(100% - 8px) 100%, 8px 100%);
`;
const StatusGroup = styled.div`
  display: flex;
  align-items: flex-start;
  gap: 2px;
  padding-top: 3px;
`;
const StatusCell = styled.div<{ $w: number; $end?: boolean }>`
  display: flex;
  align-items: center;
  justify-content: ${p => (p.$end ? 'flex-end' : 'center')};
  gap: 9px;
  width: ${p => p.$w}px;
  height: 23px;
  padding: 0 4px;
  background: ${c.panel};
  color: #f1f3f5;
  white-space: nowrap;
`;
const StatusBar = styled.footer`
  display: flex;
  gap: 2px;
  height: 28px;
  padding: 1px 0 4px 40px;
`;
const StatusButton = styled.button<{ $on?: boolean }>`
  display: flex;
  flex: none;
  align-items: center;
  justify-content: center;
  width: 22px;
  height: 23px;
  background: ${p => (p.$on ? c.active : c.panel)};
`;
const StatusPair = styled.div<{ $w: number }>`
  display: flex;
  flex: none;
  width: ${p => p.$w}px;
  height: 23px;
  background: ${c.panel};
  & > button:last-child { flex: 1; width: auto; background: transparent; }
`;
const StatusSelect = styled.label<{ $w: number; $gap?: number }>`
  display: flex;
  flex: none;
  align-items: center;
  gap: ${p => p.$gap ?? 0}px;
  width: ${p => p.$w}px;
  height: 23px;
  padding: 0 4px 0 ${p => (p.$gap ? 5 : 1)}px;
  background: ${c.panel};
  color: #f1f3f5;
`;

/* ---------- data ---------- */

const ribbonTabs = ['默认', '插入', '注释', '参数化', '视图', '管理', '输出', '附加模块', '协作', '精选应用', 'Express Tools', '天正建筑'];
const modifyTools = ['move', 'rotate', 'trim', 'erase', 'copy', 'mirror', 'fillet', 'explode', 'stretch', 'scale', 'array', 'offset'];
const layerTools = ['layOff', 'layIso', 'layFreeze', 'layLock', 'layCurrent', 'layOn', 'layUniso', 'layThaw', 'layUnlock', 'layMatch'];
const folded = [['block', '块'], ['props', '特性'], ['group', '组'], ['ruler', '实用工具'], ['clip', '剪贴板']];
const paletteItems = [
  '设　　置', '轴网柱子', '墙　　体', '门　　窗', '房间屋顶', '楼梯其他', '立　　面', '剖　　面', '文字表格', '尺寸标注', '符号标注',
  '图层控制', '工　　具', '图块图案', '建筑防火', '场地布置', '三维建模', '文件布图', '其　　它', '数据中心', '帮助演示',
];
const toolbars = [
  { x: 131, y: 15, w: 555, tools: 'redGrid twoColumns axisAdd axisNo | floorGap wallPiece lWall wallMove door column | charPencil char charBlock | dimRed dimBlue dimPlain radius angle arcDim | nodes moveRed moveBlue paste' },
  { x: 101, y: 45, w: 358, tools: 'stack layerEye | bulbOff bulbPage bulbOn bulbAll flake flakePage thaw lock lockPage unlockY stackDark stackBlue stackPen' },
  { x: 71, y: 95, w: 562, tools: 'handPage magPage | windowBars mapBox | nodeLine nodeLine2 slab stairs noteLines triangleMark exitBlock level abMark | plan waves dome portal | eyeRed pagePencil eye | tiles film broom' },
  { x: 72, y: 143, w: 577, tools: 'config notePen stack redGrid twoColumns axisDots column wallPiece beamArrows door area areaTable windowBars gate gateTwo mail stamp brush book sheet level noteLines triangleMark compass help' },
  { x: 110, y: 193, w: 326, tools: 'order1 order2 order3 order4 | alignL alignR alignC | alignT alignB alignM | distV distH slashes' },
];

type StatusItem = { n: string; on?: boolean; w?: number };
const statusLeft: StatusItem[] = [
  { n: 'drafting' }, { n: 'dynInput', on: true }, { n: 'ortho' }, { n: 'polar', on: true, w: 40 }, { n: 'isoDraft', w: 36 },
  { n: 'track', on: true }, { n: 'osnap', on: true, w: 38 }, { n: 'lineweight' }, { n: 'transparency', on: true }, { n: 'cycle' },
  { n: 'osnap3d', w: 40 }, { n: 'dynUcs', on: true }, { n: 'filter', w: 38 }, { n: 'gizmo', on: true, w: 38 },
  { n: 'annoVis', on: true }, { n: 'annoAuto' }, { n: 'anno' },
];
const statusRight: StatusItem[] = [
  { n: 'quickProps' }, { n: 'lockUi', w: 40 }, { n: 'isolate' }, { n: 'hardware' }, { n: 'thin' }, { n: 'grey' }, { n: 'thick' },
  { n: 'checks' }, { n: 'clean', on: true }, { n: 'full' }, { n: 'menu' },
];

const StatusTool = ({ n, on, w }: StatusItem) =>
  w ? (
    <StatusPair $w={w}>
      <StatusButton $on={on} aria-label={n}><Icon name={n} /></StatusButton>
      <StatusButton aria-label={`${n} options`}><Caret /></StatusButton>
    </StatusPair>
  ) : (
    <StatusButton $on={on} aria-label={n}><Icon name={n} /></StatusButton>
  );

/* ---------- sections ---------- */

const Title = () => (
  <TitleBar>
    <PlainButton $w={20} aria-label="Application menu">
      <svg width="15" height="16" viewBox="0 0 15 16">
        <path d="M5 0H9L14 15H10L9 11H4L3 15H0Z M6 4L5 8H8L7 4Z" fill="#d12f36" fillRule="evenodd" />
        <path d="M0 15L4 10L10 8L12 9L4 12Z" fill="#8d1b26" />
      </svg>
    </PlainButton>
    <PlainButton $w={13} aria-label="More"><Caret $small /></PlainButton>
    <QuickTools>
      {['new', 'open', 'save', 'saveAs', 'mobileOpen', 'mobileSave', 'print', 'undo'].map(n => (
        <PlainButton key={n} aria-label={n}><Icon name={n} /></PlainButton>
      ))}
    </QuickTools>
    <PlainButton $w={10} aria-label="Undo list"><Caret $small /></PlainButton>
    <PlainButton $w={25} aria-label="redo"><Icon name="redo" /></PlainButton>
    <PlainButton $w={10} aria-label="Redo list"><Caret $small /></PlainButton>
    <PlainButton $w={18} aria-label="Customize">
      <svg width="9" height="9" viewBox="0 0 9 9">{L('M0 1H9')}{F('M0 4H9L4.500 8Z')}</svg>
    </PlainButton>
    <Share><Icon name="plane" size={15} />共享</Share>
    <DocTitle>Drawing1.dwg</DocTitle>
    <PlainButton $w={13} aria-label="Collapse search"><Caret $side /></PlainButton>
    <HelpSearch aria-label="搜索" placeholder="键入关键字或短语" />
    <PlainButton $w={24} aria-label="search"><Icon name="search" size={15} /></PlainButton>
    <Login><Icon name="user" size={15} />登录</Login>
    <PlainButton $w={18} aria-label="Account menu"><Caret $small /></PlainButton>
    <PlainButton $w={23} aria-label="cart"><Icon name="cart" size={13} /></PlainButton>
    <PlainButton $w={23} aria-label="hub"><Icon name="hub" size={15} /></PlainButton>
    <PlainButton $w={10} aria-label="Hub menu"><Caret $small /></PlainButton>
    <Divider />
    <PlainButton $w={22} aria-label="Help">
      <svg width="16" height="16" viewBox="0 0 16 16">{C(8, 8, 8, c.white)}{L('M5.500 6C5.500 2.500 10.500 2.500 10.500 6C10.500 8 8 8 8 10', c.chrome, 1.7)}{R(7, 11, 2, 2, c.chrome)}</svg>
    </PlainButton>
    <PlainButton $w={14} aria-label="Help menu"><Caret $small /></PlainButton>
    <WindowControls>
      <PlainButton $w={25} aria-label="Minimize"><svg width="8" height="12" viewBox="0 0 8 12">{R(0, 9, 8, 2)}</svg></PlainButton>
      <PlainButton $w={25} aria-label="Maximize"><svg width="12" height="11" viewBox="0 0 12 11">{L('M1 1H11V10H1Z', c.white, 1.5)}</svg></PlainButton>
      <PlainButton $w={25} aria-label="Close"><svg width="12" height="12" viewBox="0 0 12 12">{L('M1 1L11 11M11 1L1 11', c.white, 2)}</svg></PlainButton>
    </WindowControls>
  </TitleBar>
);

const RibbonArea = () => (
  <>
    <RibbonTabs>
      {ribbonTabs.map((t, i) => <RibbonTab key={t} $on={i === 0}>{t}</RibbonTab>)}
      <Collapse aria-label="Collapse ribbon"><CollapseBox><Caret $small $up $dark /></CollapseBox><Caret $small /></Collapse>
    </RibbonTabs>
    <Ribbon>
      <Panel $w={207}>
        <PanelBody>
          <BigTool $w={42}><BigIcon name="line" /><Label>直线</Label></BigTool>
          <BigTool $w={38}><BigIcon name="polyline" /><Label>多段线</Label></BigTool>
          <BigTool $w={38}><BigIcon name="circle" /><Label>圆</Label><Caret $small /></BigTool>
          <BigTool $w={45}><BigIcon name="arc" /><Label>圆弧</Label><Caret $small /></BigTool>
          <ToolGrid $cols="40px">
            {['rect', 'ellipse', 'hatch'].map(n => (
              <SmallTool key={n} aria-label={n}><Icon name={n} /><Caret $small /></SmallTool>
            ))}
          </ToolGrid>
        </PanelBody>
        <PanelTitle>绘图<Caret /></PanelTitle>
      </Panel>
      <Panel $w={130}>
        <PanelBody>
          <ToolGrid $cols="28px 29px 40px 28px">
            {modifyTools.map((n, i) => (
              <SmallTool key={n} aria-label={n}><Icon name={n} />{i % 4 === 2 && <Caret $small />}</SmallTool>
            ))}
          </ToolGrid>
        </PanelBody>
        <PanelTitle>修改<Caret /></PanelTitle>
      </Panel>
      <Panel $w={122}>
        <PanelBody>
          <BigTool $w={46}><TextGlyph>A</TextGlyph><Label>文字</Label><Caret $small /></BigTool>
          <BigTool $w={36}><BigIcon name="dim" /><Label>标注</Label></BigTool>
          <ToolGrid $cols="36px">
            <SmallTool aria-label="linear"><Icon name="linear" /><Caret $small /></SmallTool>
            <SmallTool aria-label="leader"><Icon name="leader" /><Caret $small /></SmallTool>
            <SmallTool aria-label="table"><Icon name="table" /></SmallTool>
          </ToolGrid>
        </PanelBody>
        <PanelTitle>注释<Caret /></PanelTitle>
      </Panel>
      <Panel $w={246}>
        <PanelBody>
          <BigTool $w={40}><BigIcon name="layers" /><Label>{'图层\n特性'}</Label></BigTool>
          <LayerTools>
            <LayerCombo>
              <Icon name="bulb" size={14} /><Icon name="sun" /><Icon name="unlock" size={15} /><Swatch />
              <BareSelect aria-label="图层"><option>0</option></BareSelect><Caret />
            </LayerCombo>
            <LayerGrid>
              {layerTools.map(n => <LayerButton key={n} aria-label={n}><Icon name={n} /></LayerButton>)}
            </LayerGrid>
          </LayerTools>
        </PanelBody>
        <PanelTitle>图层<Caret /></PanelTitle>
      </Panel>
      <FoldedRow>
        {folded.map(([n, t]) => (
          <FoldedPanel key={n}><BigIcon name={n} /><Label>{t}</Label><Caret /></FoldedPanel>
        ))}
      </FoldedRow>
      <Panel>
        <PanelBody>
          <BigTool $w={58}><BigIcon name="base" /><Label>基点</Label><Caret $small /></BigTool>
        </PanelBody>
        <PanelTitle>视图<Caret /><svg width="6" height="6" viewBox="0 0 6 6">{L('M0 0L4 4M5 1V5H1')}</svg></PanelTitle>
      </Panel>
    </Ribbon>
  </>
);

const ViewCube = () => (
  <Cube width="88" height="92" viewBox="-3 -6 88 92" fontFamily="Noto Sans CJK SC" fontSize="12" fill="#9a9a9a" textAnchor="middle">
    {C(41, 41, 34, 'none', '#303030', 6)}
    <rect x="25" y="25" width="33" height="33" fill="#a3a3a3" />
    <rect x="31" y="31" width="21" height="21" fill="#949999" />
    <text x="41" y="48" fontSize="18" fill="#3f4648">上</text>
    <text x="41" y="11">北</text>
    <text x="41" y="81">南</text>
    <text x="6" y="46">西</text>
    <text x="76" y="46">东</text>
  </Cube>
);

const Navigation = () => (
  <NavBar>
    <svg width="31" height="207" viewBox="0 0 31 207" fill="none" stroke="#2a2a2a" strokeWidth="1.1">
      <circle cx="25" cy="5" r="3" /><path d="M24 4L26 6M26 4L24 6" />
      <path d="M5 29C5 15 26 15 26 26V38H14C8 38 5 34 5 29Z" /><circle cx="16" cy="29" r="6" /><circle cx="16" cy="29" r="9" />
      <path d="M14 48H18L16 50Z" fill="#2a2a2a" />
      <path d="M3 55H28M3 160H28" stroke="#555" />
      <path d="M12 81C9 76 5 72 6 70C8 69 10 72 11 74L9 63C10 61 12 62 13 69L13 61C14 59 16 60 16 68L18 61C20 60 20 62 20 69L23 65C25 64 25 66 24 69L22 77L20 81Z" />
      <path d="M5 88L20 103M20 88L5 103M5 91V88H8M17 88H20V91M5 100V103H8" /><circle cx="20" cy="102" r="5" /><path d="M24 106L28 110" strokeWidth="2" />
      <path d="M14 117H18L16 119Z" fill="#2a2a2a" />
      <path d="M14 146V131H11L16 125L21 131H18V146ZM9 134C0 138 8 142 21 141C28 139 28 135 22 134M7 141L13 138V144Z" />
      <path d="M14 154H18L16 156Z" fill="#2a2a2a" />
      <path d="M5 165H11V171H5ZM13 165H19V171H13ZM21 165H27V171H21ZM5 175H21V187H5Z" /><path d="M10 177L16 181L10 185Z" fill="#2a2a2a" />
      <circle cx="25" cy="201" r="3" /><path d="M23 201H27" />
    </svg>
  </NavBar>
);

const DrawingArea = () => (
  <Canvas>
    <ViewLabel>[−][俯视][二维线框]</ViewLabel>
    {toolbars.map(bar => (
      <Floating key={bar.y} $x={bar.x} $y={bar.y} $w={bar.w} role="toolbar">
        <Grip />
        <FloatingTools>
          {bar.tools.split(' ').map((n, i) =>
            n === '|' ? <ToolRule key={i} /> : <ToolButton key={i} aria-label={n}><Icon name={n} size={15} /></ToolButton>,
          )}
        </FloatingTools>
        <CloseFloating aria-label="Close toolbar">
          <svg width="7" height="8" viewBox="0 0 7 8">{L('M1 1L6 7M6 1L1 7', '#eef0f2', 2)}</svg>
        </CloseFloating>
      </Floating>
    ))}
    <Crosshair width="95" height="95" viewBox="0 0 95 95">
      {L('M47.500 0V44M47.500 51V95M0 46.500H44M51 46.500H95', '#d8d8d8')}
      {L('M44.500 43.500H50.500V49.500H44.500Z', '#fff')}
    </Crosshair>
    <Ucs width="74" height="90" viewBox="0 -16 74 90" fontFamily="Lato" fontSize="18" fontWeight="300" fill="#ddd" textAnchor="middle">
      {L('M5.500 12V61M5.500 60.500H53', '#d8d8d8')}
      {L('M1.500 55.500H10.500V64.500H1.500Z', '#fff')}
      <text x="12" y="8">Y</text>
      <text x="63" y="60">X</text>
    </Ucs>
    <ChildControls>
      <button aria-label="Minimize drawing"><svg width="11" height="11" viewBox="0 0 11 11">{R(1, 7, 9, 3, '#fff')}</svg></button>
      <button aria-label="Restore drawing"><svg width="11" height="11" viewBox="0 0 11 11">{L('M3 2V1H10V8H9', '#fff', 1.4)}{L('M2 4H8V10H2Z', '#fff', 2)}</svg></button>
      <button aria-label="Close drawing"><svg width="11" height="11" viewBox="0 0 11 11">{L('M2 2L9 9M9 2L2 9', '#fff', 2.2)}</svg></button>
    </ChildControls>
    <ViewCube />
    <UcsMenu>未命名<Caret $small /></UcsMenu>
    <Navigation />
    <CommandLine>
      <Grip />
      <PlainButton $w={20} aria-label="Close command line"><svg width="9" height="9" viewBox="0 0 9 9">{L('M0 0L9 9M9 0L0 9', '#cdd1d6', 1.6)}</svg></PlainButton>
      <PlainButton $w={26} aria-label="Customize command line"><Icon name="wrench" size={14} /></PlainButton>
      <CommandBox>
        <Icon name="prompt" />
        <Caret $dark $small />
        <CommandInput aria-label="命令" placeholder="键入命令" />
        <Caret $dark $small $up />
      </CommandBox>
    </CommandLine>
  </Canvas>
);

export default function App() {
  return (
    <Window>
      <GlobalStyle />
      <Title />
      <RibbonArea />
      <Workspace>
        <Palette>
          <PaletteHead><Grip />T...</PaletteHead>
          <PaletteList>
            {paletteItems.map(t => <li key={t}><PaletteItem>{t}</PaletteItem></li>)}
          </PaletteList>
        </Palette>
        <DrawingArea />
      </Workspace>
      <LayoutRow>
        <LayoutTabs>
          <LayoutTab $on $w={50}>模型</LayoutTab>
          <LayoutTab $w={50}>布局1</LayoutTab>
          <LayoutTab $w={52}>布局2</LayoutTab>
          <LayoutTab $w={28} aria-label="新建布局">+</LayoutTab>
        </LayoutTabs>
        <StatusGroup>
          <StatusSelect $w={72}>
            <BareSelect aria-label="比例"><option>比例 1:100</option></BareSelect><Caret />
          </StatusSelect>
          <StatusCell $w={136} $end>8732, 14816, 0</StatusCell>
          <StatusCell as="button" $w={31}>模型</StatusCell>
          <StatusCell $w={62}>
            <PlainButton aria-label="grid"><Icon name="grid" size={14} /></PlainButton>
            <PlainButton aria-label="dots"><Icon name="dots" size={14} /></PlainButton>
            <Caret />
          </StatusCell>
        </StatusGroup>
      </LayoutRow>
      <StatusBar>
        {statusLeft.map(s => <StatusTool key={s.n} {...s} />)}
        <StatusSelect $w={76}>
          <BareSelect aria-label="注释比例"><option>1:1 / 100%</option></BareSelect><Caret />
        </StatusSelect>
        <StatusTool n="gear" w={40} />
        <StatusTool n="plus" />
        <StatusSelect $w={96} $gap={7}>
          <Icon name="ruler" />
          <BareSelect aria-label="单位"><option>小数</option></BareSelect><Caret />
        </StatusSelect>
        {statusRight.map(s => <StatusTool key={s.n} {...s} />)}
      </StatusBar>
    </Window>
  );
}
